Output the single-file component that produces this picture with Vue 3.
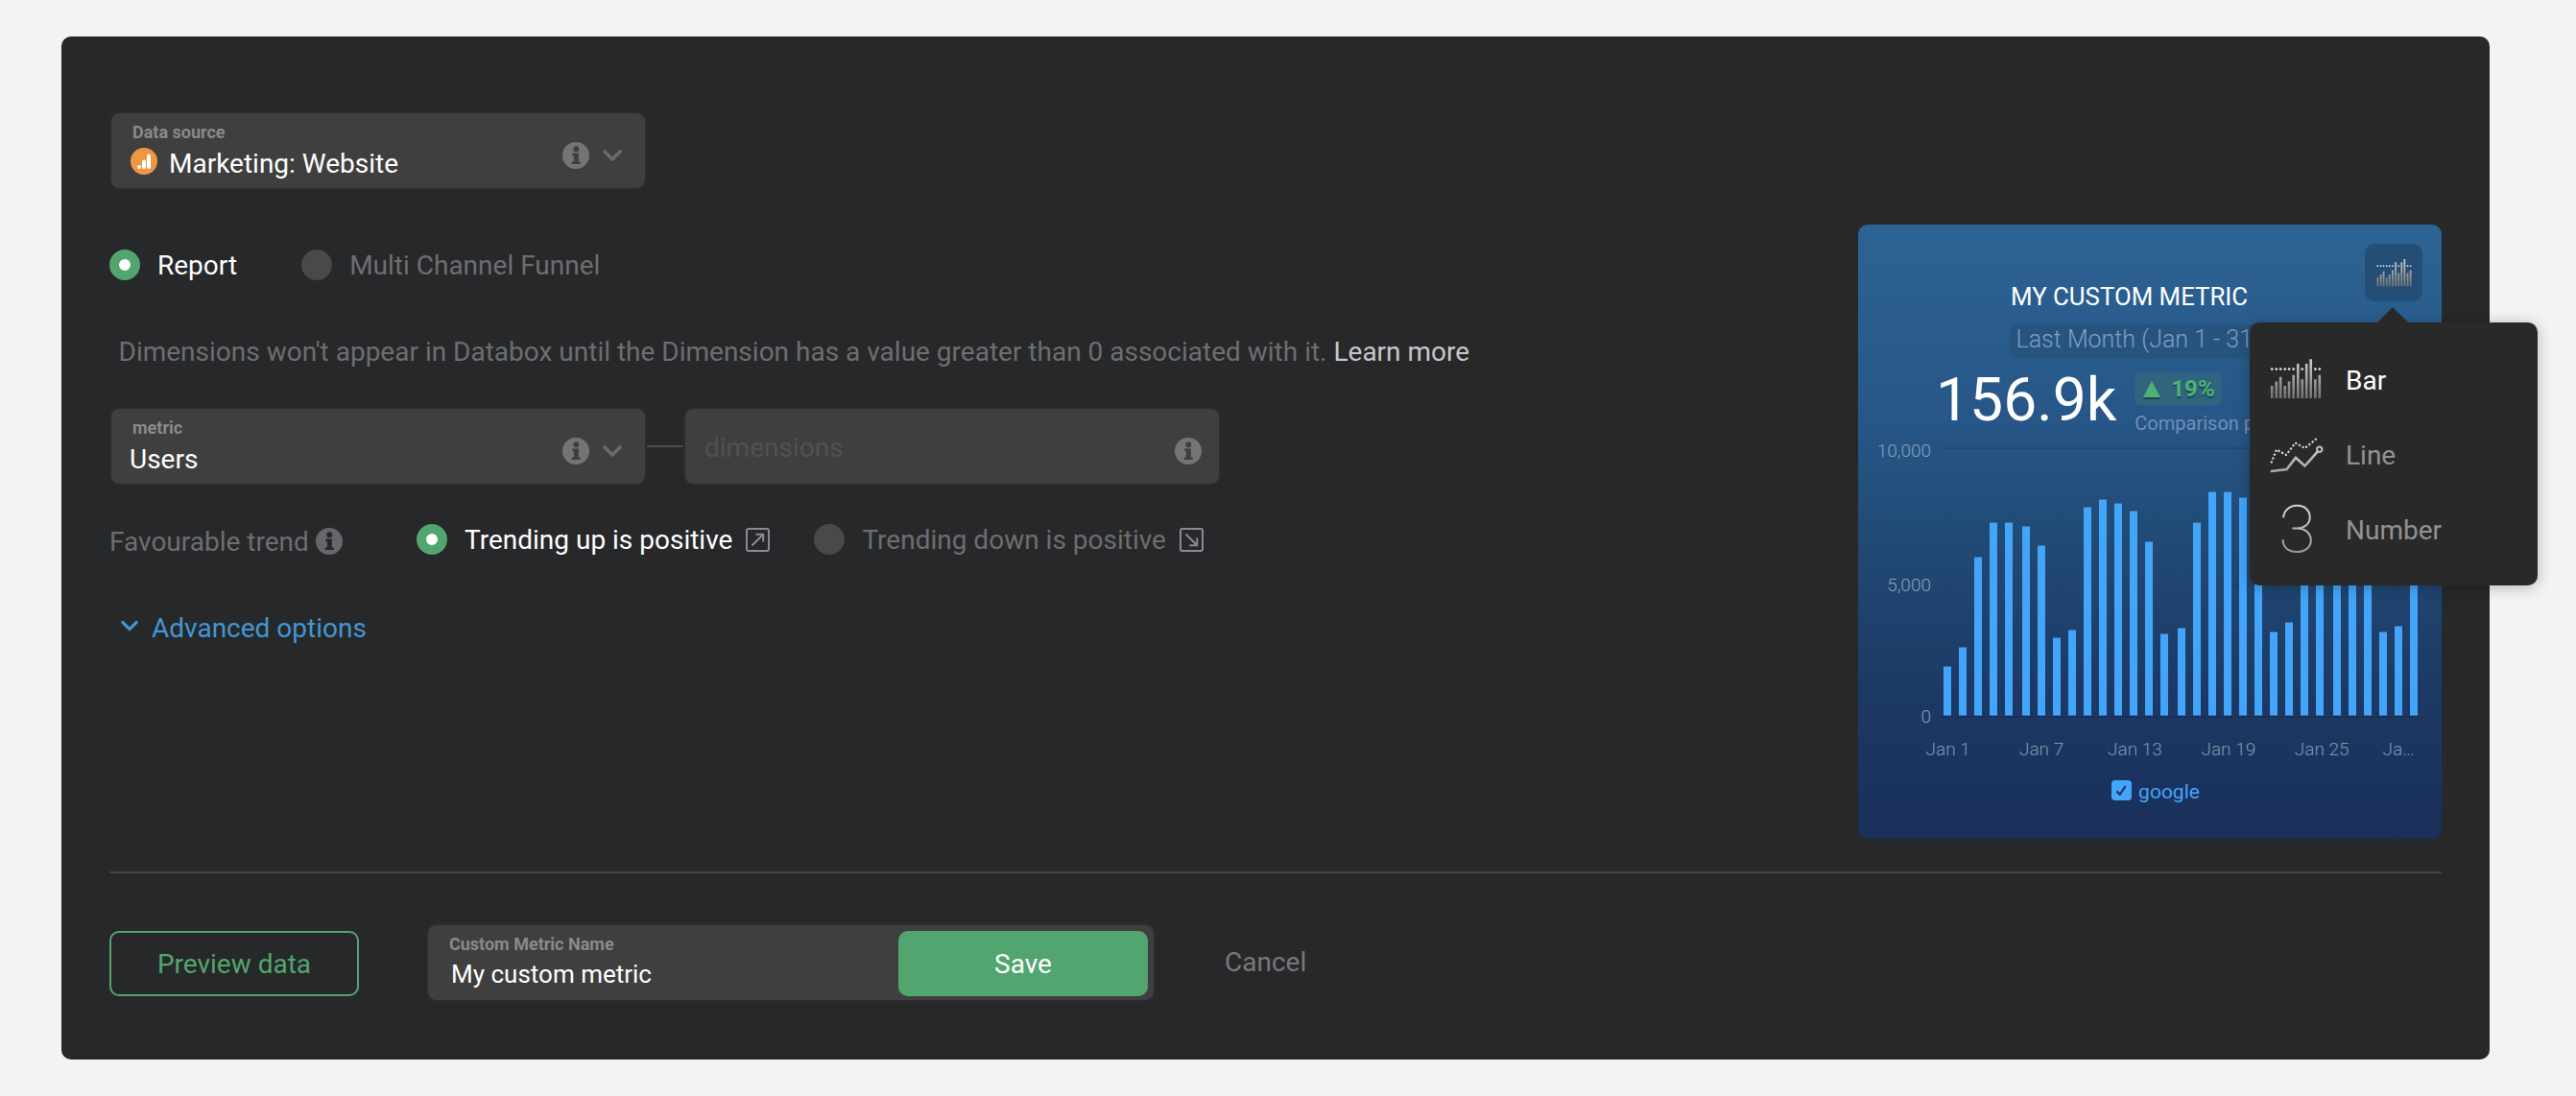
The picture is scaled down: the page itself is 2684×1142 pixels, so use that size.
<script setup>
import { ref, computed } from 'vue';

// --- FORM STATE ---
const reportType = ref('report');
const trend = ref('up');
const chartType = ref('bar');
const metricName = ref('My custom metric');

const reportTypes = [
  { id: 'report', label: 'Report' },
  { id: 'funnel', label: 'Multi Channel Funnel' }
];

const trends = [
  { id: 'up', label: 'Trending up is positive', arrow: 'M6.5 18.5 L18 7 M10.5 6.8 H18.2 V14.5' },
  { id: 'down', label: 'Trending down is positive', arrow: 'M6.5 6.5 L18 18 M10.5 18.2 H18.2 V10.5' }
];

const chartTypes = [
  { id: 'bar', label: 'Bar' },
  { id: 'line', label: 'Line' },
  { id: 'number', label: 'Number' }
];

// --- PREVIEW CHART ---
const bars = [
  52, 72, 166, 202, 202, 198, 178, 82, 90, 218, 226, 222, 214, 182, 86, 92,
  202, 234, 234, 228, 200, 88, 98, 204, 222, 220, 214, 190, 88, 94, 196
];
const xLabels = ['Jan 1', 'Jan 7', 'Jan 13', 'Jan 19', 'Jan 25', 'Ja…'];
const yLabels = ['10,000', '5,000', '0'];

const title = computed(() => metricName.value.toUpperCase());

// Mini bars used by the "bar" glyph (x, top)
const glyphBars = [
  [6, 87], [20, 73], [33, 59], [47, 87], [60, 73], [74, 53],
  [88, 17], [101.5, 66], [115, 17], [128.5, 3], [142.5, 66], [156, 53]
];
const glyphDots = [6, 20, 33, 47, 60, 74, 101.5, 142.5, 156];
</script>

<template>
  <div class="page">
    <!-- Shared symbols -->
    <svg class="defs" width="0" height="0">
      <defs>
        <linearGradient id="metal" gradientUnits="userSpaceOnUse" x1="0" y1="0" x2="0" y2="130">
          <stop offset="0" stop-color="#d2d2d2" />
          <stop offset="1" stop-color="#6c6f71" />
        </linearGradient>
        <linearGradient id="silver" gradientUnits="userSpaceOnUse" x1="0" y1="0" x2="0" y2="54">
          <stop offset="0" stop-color="#dcdcdc" />
          <stop offset="1" stop-color="#909395" />
        </linearGradient>
      </defs>
      <symbol id="info" viewBox="0 0 28 28">
        <path fill-rule="evenodd" d="M14 0a14 14 0 1 0 0 28a14 14 0 1 0 0-28z M14.3 4.3a3 3 0 1 1 0 6a3 3 0 1 1 0-6z M10.3 11.6h6.6v8.9h1.9v2.5h-9v-2.5h2.1v-6.2h-1.6z" />
      </symbol>
      <symbol id="chevron" viewBox="0 0 20 12">
        <path d="M2 2 L10 10 L18 2" fill="none" stroke="currentColor" stroke-width="3.6" stroke-linecap="round" stroke-linejoin="round" />
      </symbol>
      <symbol id="bar" viewBox="0 0 162 130">
        <line v-for="b in glyphBars" :key="b[0]" :x1="b[0]" :x2="b[0] + 0.01" :y1="b[1] + 1" y2="127" stroke="url(#metal)" stroke-width="8" />
        <circle v-for="d in glyphDots" :key="'d' + d" :cx="d" cy="35" r="4" fill="#e2e2e2" />
      </symbol>
    </svg>

    <div class="panel">
      <div class="content">
        <div class="form">
          <div class="field select">
            <div class="field-text">
              <span class="field-label">Data source</span>
              <span class="field-value source">
                <svg class="source-icon" viewBox="0 0 28 28">
                  <circle cx="14" cy="14" r="14" fill="#ed9742" />
                  <circle cx="9" cy="20" r="2" fill="#fff" />
                  <path d="M14 14.5 V20 M19 8.5 V20" stroke="#fff" stroke-width="4" stroke-linecap="round" />
                </svg>
                Marketing: Website
              </span>
            </div>
            <div class="field-icons">
              <svg class="info"><use href="#info" /></svg>
              <svg class="chevron"><use href="#chevron" /></svg>
            </div>
          </div>

          <div class="radio-row types">
            <div v-for="t in reportTypes" :key="t.id" class="radio" :class="{ active: reportType === t.id }" @click="reportType = t.id">
              <span class="radio-dot"></span>
              <span class="radio-label">{{ t.label }}</span>
            </div>
          </div>

          <p class="note">
            Dimensions won't appear in Databox until the Dimension has a value greater than 0 associated with it.
            <a class="learn">Learn more</a>
          </p>

          <div class="field-row">
            <div class="field select">
              <div class="field-text">
                <span class="field-label">metric</span>
                <span class="field-value">Users</span>
              </div>
              <div class="field-icons">
                <svg class="info"><use href="#info" /></svg>
                <svg class="chevron"><use href="#chevron" /></svg>
              </div>
            </div>
            <div class="connector"></div>
            <div class="field dimensions">
              <span class="placeholder">dimensions</span>
              <div class="field-icons">
                <svg class="info"><use href="#info" /></svg>
              </div>
            </div>
          </div>

          <div class="radio-row trends">
            <div class="trend-label">
              <span>Favourable trend</span>
              <svg class="info"><use href="#info" /></svg>
            </div>
            <div v-for="t in trends" :key="t.id" class="radio" :class="{ active: trend === t.id }" @click="trend = t.id">
              <span class="radio-dot"></span>
              <span class="radio-label">{{ t.label }}</span>
              <svg class="trend-icon" viewBox="0 0 25 25">
                <rect x="1" y="1" width="23" height="23" rx="2" />
                <path :d="t.arrow" />
              </svg>
            </div>
          </div>

          <div class="advanced">
            <svg class="chevron"><use href="#chevron" /></svg>
            <span>Advanced options</span>
          </div>
        </div>

        <div class="card">
          <div class="card-head">
            <div class="card-title">{{ title }}</div>
            <div class="card-period">Last Month (Jan 1 - 31)</div>
          </div>

          <div class="card-value">
            <span class="big">156.9k</span>
            <div class="change">
              <span class="badge"><svg class="triangle" viewBox="0 0 18 17"><path d="M9 0 L18 17 H0z" /></svg>19%</span>
              <span class="comparison">Comparison period</span>
            </div>
          </div>

          <div class="chart">
            <div class="y-axis">
              <span v-for="y in yLabels" :key="y">{{ y }}</span>
            </div>
            <div class="plot">
              <div v-for="(b, i) in bars" :key="i" class="bar" :style="{ height: b + 'px' }"></div>
            </div>
          </div>
          <div class="x-axis">
            <span v-for="x in xLabels" :key="x">{{ x }}</span>
          </div>

          <div class="legend">
            <svg class="check" viewBox="0 0 21 21">
              <rect width="21" height="21" rx="4" fill="#43a5fa" />
              <path d="M5.4 11.4 L8.8 14.8 L14.6 6.2" fill="none" stroke="#1b345f" stroke-width="2.2" />
            </svg>
            <span>google</span>
          </div>

          <div class="type-button"><svg class="type-glyph"><use href="#bar" /></svg></div>

          <div class="menu">
            <div v-for="c in chartTypes" :key="c.id" class="menu-item" :class="{ active: chartType === c.id }" @click="chartType = c.id">
              <svg v-if="c.id === 'bar'" class="glyph-bar"><use href="#bar" /></svg>
              <svg v-else-if="c.id === 'line'" class="glyph-line" viewBox="0 0 56 40" fill="none">
                <path d="M1.7 28.5 L7 15.5 L17 21 L26.5 8.5 L36.5 14 L50.5 2.5" stroke="#dadada" stroke-width="2.4" stroke-linecap="round" stroke-dasharray="0.1 4.1" />
                <path d="M1.8 38 L17.5 36 L27 24 L36.5 32.5 L49.7 17.6" stroke="url(#silver)" stroke-width="2.6" stroke-linecap="round" />
                <circle cx="51.7" cy="15.3" r="2.7" stroke="#bdbdbd" stroke-width="2" />
              </svg>
              <svg v-else class="glyph-number" viewBox="0 0 33 52" fill="none">
                <path d="M2.2 14.5 A14 12.7 0 0 1 16.3 1.8 C24.5 1.8 29.7 7 29.7 14 C29.7 21.5 23.5 25.5 16 25.5 H11.5 M16 25.5 C24.5 25.5 30.8 30.3 30.8 38 C30.8 45 25 50 16.3 50 C7.5 50 1.6 45.5 1.6 37.2" stroke="url(#silver)" stroke-width="2" />
              </svg>
              <span>{{ c.label }}</span>
            </div>
          </div>
        </div>
      </div>

      <div class="footer">
        <button class="btn outline">Preview data</button>
        <div class="field name">
          <label class="field-text">
            <span class="field-label">Custom Metric Name</span>
            <input v-model="metricName" type="text">
          </label>
          <button class="btn primary">Save</button>
        </div>
        <a class="cancel">Cancel</a>
      </div>
    </div>
  </div>
</template>

<style>
body { background: #f2f3f5; }
</style>

<style scoped>
.page {
  --green: #52a56f;
  --muted: #6d6e71;
  --bar: #43a5fa;

  height: 1142px;
  padding: 38px 90px 38px 64px;
  box-sizing: border-box;
  background: #f2f3f5;
  font-family: Roboto, 'Liberation Sans', sans-serif;
  font-size: 28px;
  line-height: 32px;
  color: #fff;
  overflow: hidden;
}
.defs { position: absolute; }

.panel {
  height: 1066px;
  padding: 78px 50px 0;
  box-sizing: border-box;
  background: #27282a;
  border-radius: 10px;
}

.content {
  display: flex;
  justify-content: space-between;
  height: 794px;
  box-sizing: border-box;
  border-bottom: 2px solid #434446;
}

/* --- FIELDS --- */
.field {
  display: flex;
  justify-content: space-between;
  width: 560px;
  height: 82px;
  box-sizing: border-box;
  background: #3f3f3f;
  background-clip: padding-box;
  border: 2px solid #2c2c30;
  border-radius: 10px;
}
.field-text { display: flex; flex-direction: column; padding: 10px 0 0 19px; }
.field-label {
  padding-left: 3px;
  font-size: 18px;
  line-height: 20px;
  font-weight: 700;
  color: #8a8a8a;
}
.field-value { margin-top: 7px; }
.source { display: flex; gap: 12px; padding-left: 1px; }
.source-icon { width: 28px; height: 28px; margin-top: -1px; }
.field-icons {
  display: flex;
  align-items: center;
  gap: 14px;
  padding: 10px 24px 0 0;
}
.info { width: 28px; height: 28px; fill: #747474; }
.chevron { width: 20px; height: 12px; color: #6a6a6a; }

.field-row { display: flex; align-items: center; margin-top: 41px; }
.connector { width: 38px; height: 2px; background: #4b4c4e; }
.dimensions .placeholder { padding: 25px 0 0 20px; color: #515151; }
.dimensions .field-icons { padding-right: 18px; }

/* --- RADIOS --- */
.radio-row { display: flex; align-items: center; height: 32px; }
.types { margin-top: 62px; gap: 67px; }
.trends { margin-top: 40px; }
.radio { display: flex; align-items: center; color: var(--muted); }
.radio-dot {
  width: 32px;
  height: 32px;
  margin-right: 18px;
  box-sizing: border-box;
  border-radius: 50%;
  background: #48494b;
}
.radio-label { height: 32px; padding-top: 1px; box-sizing: border-box; }
.radio.active { color: #fff; }
.radio.active .radio-dot { background: #fff; border: 10px solid var(--green); }
.trends .radio + .radio { margin-left: 46px; }
.trend-icon {
  width: 25px;
  height: 25px;
  margin-left: 14px;
  fill: none;
  stroke: #8a8a96;
  stroke-width: 2;
}
.trend-label {
  display: flex;
  align-items: center;
  gap: 7px;
  width: 320px;
  padding-top: 4px;
  color: var(--muted);
}
.trend-label span { padding-top: 2px; }
.trend-label .info { fill: #66676a; }

.note { margin: 59px 0 0; padding-left: 9.5px; color: var(--muted); }
.learn { color: #c6c7c9; }
.advanced {
  display: flex;
  align-items: center;
  gap: 14px;
  margin-top: 61px;
  padding-left: 12px;
  color: #4496d2;
}
.advanced .chevron { width: 18px; color: #4496d2; margin-bottom: 6px; }

/* --- PREVIEW CARD --- */
.card {
  position: relative;
  width: 608px;
  height: 640px;
  margin-top: 118px;
  border-radius: 10px;
  background: linear-gradient(#2d6394 0%, #265687 33%, #214a75 51%, #1c3864 78%, #19305a 100%);
}
.card-head { width: 292px; margin: 0 auto; padding-top: 60px; }
.card-title { padding-left: 1px; font-size: 25.8px; line-height: 30px; white-space: nowrap; }
.card-period {
  height: 32px;
  margin-top: 14px;
  padding: 0 0 4px 6.5px;
  border-radius: 8px;
  background: #26547f;
  font-size: 25px;
  line-height: 32px;
  font-weight: 300;
  color: #7f9fc0;
  white-space: nowrap;
}
.card-value { display: flex; gap: 19px; height: 76px; margin-top: 7px; padding-left: 81px; }
.big { font-size: 62.4px; line-height: 71px; }
.change { display: flex; flex-direction: column; align-items: flex-start; padding-top: 7px; }
.badge {
  display: flex;
  align-items: center;
  gap: 11px;
  height: 34px;
  padding: 0 7px 0 9px;
  border-radius: 6px;
  background: #30657f;
  font-size: 24px;
  font-weight: 700;
  color: #4db374;
  text-shadow: 0 2px 1px rgba(20, 40, 60, 0.6);
}
.triangle { width: 18px; height: 17px; fill: #4db374; filter: drop-shadow(0 2px 0 rgba(20, 40, 60, 0.6)); }
.comparison { margin-top: 8px; font-size: 20px; line-height: 22px; color: #748fb3; white-space: nowrap; }

.chart { display: flex; height: 282px; margin-top: 9px; }
.y-axis {
  width: 76px;
  margin: -6px 10px 0 0;
  font-size: 19px;
  line-height: 20px;
  font-weight: 300;
  text-align: right;
  color: #86a0bb;
}
.y-axis span { display: block; }
.y-axis span + span { margin-top: 120px; }
.y-axis span:last-child { margin-top: 117px; }
.plot {
  display: flex;
  align-items: flex-end;
  gap: 8px;
  width: 502px;
  height: 282px;
  padding: 0 0 2px 3px;
  box-sizing: border-box;
  background:
    linear-gradient(#214b76, #214b76) 0 0 / 100% 2px no-repeat,
    linear-gradient(#1e4069, #1e4069) 0 142px / 100% 2px no-repeat,
    linear-gradient(#1b3055, #1b3055) 0 280px / 100% 2px no-repeat;
}
.bar {
  flex: none;
  width: 8px;
  box-sizing: border-box;
  background: var(--bar);
  border-top: 1px solid #2f72b4;
  border-bottom: 1px solid #2f72b4;
}
.bar:nth-child(10n + 6) { margin-left: 2px; }

.x-axis { display: flex; margin: 22px 0 0 45px; font-size: 19px; line-height: 22px; font-weight: 300; color: #8495b0; }
.x-axis span { width: 97.4px; text-align: center; }
.x-axis span:last-child { width: 62px; }

.legend {
  display: flex;
  justify-content: center;
  align-items: center;
  gap: 7px;
  margin: 17px 0 0 12px;
  font-size: 21px;
  color: var(--bar);
}
.check { width: 21px; height: 21px; margin-bottom: 3px; }

.type-button {
  position: absolute;
  top: 20px;
  right: 20px;
  display: flex;
  align-items: center;
  justify-content: center;
  width: 60px;
  height: 60px;
  border-radius: 10px;
  background: #244e75;
}
.type-glyph { width: 37px; height: 30px; }

/* --- CHART TYPE MENU --- */
.menu {
  position: absolute;
  top: 102px;
  right: -100px;
  width: 300px;
  height: 274px;
  padding-top: 20px;
  box-sizing: border-box;
  border-radius: 10px;
  background: #292929;
  box-shadow: 0 2px 16px rgba(0, 0, 0, 0.25);
}
.menu::before {
  content: '';
  position: absolute;
  top: -16px;
  right: 135px;
  border: 16px solid transparent;
  border-top: 0;
  border-bottom-color: #292929;
}
.menu-item { display: flex; align-items: center; height: 78px; padding-left: 21px; color: #929292; }
.menu-item.active { color: #fff; }
.menu-item svg { flex: none; margin-right: 23px; }
.menu-item span { padding-top: 4px; }
.menu-item .glyph-bar { width: 54px; height: 43px; margin: 0 25px 1px 0; }
.glyph-line { width: 56px; height: 40px; }
.glyph-number { width: 33px; height: 52px; padding: 0 11px 0 12px; }

/* --- FOOTER --- */
.footer { display: flex; align-items: center; height: 186px; }
.btn {
  width: 260px;
  height: 68px;
  padding: 2px 0 0;
  border: 2px solid var(--green);
  border-radius: 10px;
  font: inherit;
  cursor: pointer;
}
.outline { background: transparent; color: var(--green); margin: 2px 70px 0 0; }
.primary { background: var(--green); color: #fff; margin: 6px 6px 0 0; }
.name { width: 760px; }
.name input {
  width: 440px;
  height: 32px;
  margin-top: 5px;
  padding: 0 0 0 5px;
  border: none;
  outline: none;
  background: transparent;
  font-family: inherit;
  font-size: 26px;
  color: #fff;
}
.cancel { margin-left: 72px; color: #77787a; }
</style>
